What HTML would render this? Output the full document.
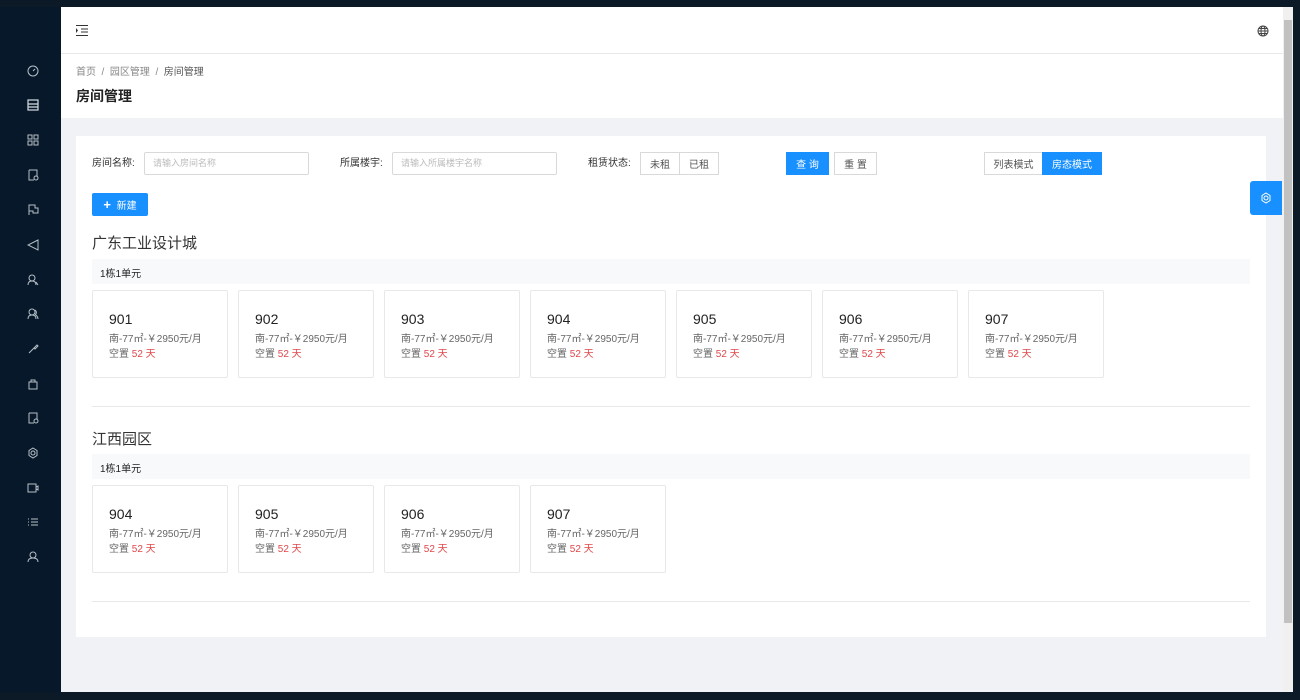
<!DOCTYPE html>
<html><head><meta charset="utf-8"><style>
*{margin:0;padding:0;box-sizing:border-box}
body{width:1300px;height:700px;background:#0b1a26;font-family:"Liberation Sans","Noto Sans CJK SC",sans-serif;position:relative;overflow:hidden;color:#333}
.side{position:absolute;left:0;top:7px;width:61px;height:685px;background:#061829}
.side svg{position:absolute;left:27px;width:12px;height:12px}
.main{position:absolute;left:61px;top:7px;width:1222px;height:685px;background:#f0f2f5}
.hdr{position:absolute;left:0;top:0;width:1222px;height:47px;background:#fff;border-bottom:1px solid #e8e8e8}
.bc{position:absolute;left:0;top:47px;width:1222px;height:64px;background:#fff}
.card{position:absolute;left:15px;top:129px;width:1190px;height:501px;background:#fff}
.abs{position:absolute}
.lbl{font-size:10px;color:#333;line-height:23px}
.inp{border:1px solid #d9d9d9;height:23px;font-size:9px;color:#bbb;padding:0 8px;line-height:21px;border-radius:2px}
.btn{border:1px solid #d9d9d9;height:23px;font-size:10px;display:flex;align-items:center;justify-content:center;color:#555;background:#fff}
.pri{background:#1890ff;border-color:#1890ff;color:#fff}
.room{position:absolute;width:136px;height:88px;border:1px solid #e8e8e8;border-radius:2px;background:#fff}
.room b{position:absolute;left:16px;top:20px;font-weight:normal;font-size:14px;color:#222}
.room .d{position:absolute;left:16px;top:39px;font-size:10px;color:#666}
.room .v{position:absolute;left:16px;top:54px;font-size:10px;color:#666}
.room .v span{color:#e0474a}
.bar{position:absolute;left:16px;width:1158px;height:25px;background:#f8f9fa;font-size:10px;color:#222;padding:6px 8px}
.ttl{position:absolute;left:16px;font-size:15px;color:#333}
.hr{position:absolute;left:16px;width:1158px;height:1px;background:#e8e8e8}
</style></head><body>
<div class="side">
<svg style="top:58px" viewBox="0 0 12 12" fill="none" stroke="#b8c0c8" stroke-width="1"><circle cx="6" cy="6" r="5"/><path d="M6 6l2-2"/></svg>
<svg style="top:92px" viewBox="0 0 12 12" fill="none" stroke="#d8dde2" stroke-width="1.2"><rect x="1" y="1" width="10" height="10"/><path d="M1 5h10M1 8h10"/></svg>
<svg style="top:127px" viewBox="0 0 12 12" fill="none" stroke="#b8c0c8"><rect x="1" y="1" width="4" height="4"/><rect x="7" y="1" width="4" height="4"/><rect x="1" y="7" width="4" height="4"/><rect x="7" y="7" width="4" height="4"/></svg>
<svg style="top:162px" viewBox="0 0 12 12" fill="none" stroke="#b8c0c8"><path d="M2 1h8v6M2 1v10h5"/><circle cx="9" cy="9" r="2"/></svg>
<svg style="top:197px" viewBox="0 0 12 12" fill="none" stroke="#b8c0c8"><path d="M2 11V1h6v3h3v5H6V7H2"/></svg>
<svg style="top:232px" viewBox="0 0 12 12" fill="none" stroke="#b8c0c8"><path d="M11 1L1 6l10 5z"/></svg>
<svg style="top:267px" viewBox="0 0 12 12" fill="none" stroke="#b8c0c8"><circle cx="5" cy="4" r="3"/><path d="M1 11c0-3 2-4 4-4s4 1 4 4M9 8l2 3"/></svg>
<svg style="top:301px" viewBox="0 0 12 12" fill="none" stroke="#b8c0c8"><circle cx="5" cy="4" r="3"/><path d="M1 11c0-3 2-4 4-4s4 1 4 4M8 2a3 3 0 010 5M11 11c0-2-1-3-2-4"/></svg>
<svg style="top:336px" viewBox="0 0 12 12" fill="none" stroke="#b8c0c8"><path d="M2 10l5-5M7 5l3-3 1 1-3 3z"/></svg>
<svg style="top:371px" viewBox="0 0 12 12" fill="none" stroke="#b8c0c8"><rect x="2" y="4" width="8" height="7"/><path d="M4 4V2h4v2"/></svg>
<svg style="top:405px" viewBox="0 0 12 12" fill="none" stroke="#b8c0c8"><path d="M2 1h8v6M2 1v10h5"/><circle cx="9" cy="9" r="2"/></svg>
<svg style="top:440px" viewBox="0 0 12 12" fill="none" stroke="#b8c0c8"><circle cx="6" cy="6" r="2"/><path d="M6 1l4 2.5v5L6 11 2 8.5v-5z"/></svg>
<svg style="top:475px" viewBox="0 0 12 12" fill="none" stroke="#b8c0c8"><rect x="1" y="2" width="8" height="8"/><path d="M9 5l2-1v4l-2-1"/></svg>
<svg style="top:509px" viewBox="0 0 12 12" fill="none" stroke="#b8c0c8"><path d="M4 3h7M4 6h7M4 9h7M1 3h1M1 6h1M1 9h1"/></svg>
<svg style="top:544px" viewBox="0 0 12 12" fill="none" stroke="#b8c0c8"><circle cx="6" cy="4" r="3"/><path d="M1 11c0-3 2-4 5-4s5 1 5 4"/></svg>
</div>
<div class="main">
<div class="hdr">
<svg class="abs" style="left:15px;top:18px" width="12" height="11" viewBox="0 0 12 11" fill="none" stroke="#333"><path d="M0 .5h12M5 4h7M5 7h7M0 10.5h12"/><path d="M0 3l2 2.5L0 8z" fill="#333" stroke="none"/></svg>
<svg class="abs" style="left:1196px;top:18px" width="12" height="12" viewBox="0 0 12 12" fill="none" stroke="#444"><circle cx="6" cy="6" r="5"/><ellipse cx="6" cy="6" rx="2" ry="5"/><path d="M1 6h10M2 3.5h8M2 8.5h8"/></svg>
</div>
<div class="bc">
<div class="abs" style="left:15px;top:9px;font-size:10px;color:#888">首页 &nbsp;/&nbsp; 园区管理 &nbsp;/&nbsp; <span style="color:#555">房间管理</span></div>
<div class="abs" style="left:15px;top:32px;font-size:14px;font-weight:bold;color:#222">房间管理</div>
</div>
<div class="card">
<div class="abs lbl" style="left:16px;top:16px">房间名称:</div>
<div class="abs inp" style="left:68px;top:16px;width:165px">请输入房间名称</div>
<div class="abs lbl" style="left:264px;top:16px">所属楼宇:</div>
<div class="abs inp" style="left:316px;top:16px;width:165px">请输入所属楼宇名称</div>
<div class="abs lbl" style="left:512px;top:16px">租赁状态:</div>
<div class="abs btn" style="left:564px;top:16px;width:40px">未租</div>
<div class="abs btn" style="left:603px;top:16px;width:40px">已租</div>
<div class="abs btn pri" style="left:710px;top:16px;width:43px">查 询</div>
<div class="abs btn" style="left:758px;top:16px;width:43px">重 置</div>
<div class="abs btn" style="left:908px;top:16px;width:59px">列表模式</div>
<div class="abs btn pri" style="left:966px;top:16px;width:60px">房态模式</div>
<div class="abs btn pri" style="left:16px;top:57px;width:56px;border-radius:2px"><b style="font-size:13px">+</b>&nbsp; 新建</div>
<div class="ttl" style="top:96px">广东工业设计城</div>
<div class="bar" style="top:123px">1栋1单元</div>
<div class="room" style="left:16px;top:154px"><b>901</b><div class="d">南-77㎡-￥2950元/月</div><div class="v">空置 <span>52 天</span></div></div>
<div class="room" style="left:162px;top:154px"><b>902</b><div class="d">南-77㎡-￥2950元/月</div><div class="v">空置 <span>52 天</span></div></div>
<div class="room" style="left:308px;top:154px"><b>903</b><div class="d">南-77㎡-￥2950元/月</div><div class="v">空置 <span>52 天</span></div></div>
<div class="room" style="left:454px;top:154px"><b>904</b><div class="d">南-77㎡-￥2950元/月</div><div class="v">空置 <span>52 天</span></div></div>
<div class="room" style="left:600px;top:154px"><b>905</b><div class="d">南-77㎡-￥2950元/月</div><div class="v">空置 <span>52 天</span></div></div>
<div class="room" style="left:746px;top:154px"><b>906</b><div class="d">南-77㎡-￥2950元/月</div><div class="v">空置 <span>52 天</span></div></div>
<div class="room" style="left:892px;top:154px"><b>907</b><div class="d">南-77㎡-￥2950元/月</div><div class="v">空置 <span>52 天</span></div></div>
<div class="hr" style="top:270px"></div>
<div class="ttl" style="top:292px">江西园区</div>
<div class="bar" style="top:318px">1栋1单元</div>
<div class="room" style="left:16px;top:349px"><b>904</b><div class="d">南-77㎡-￥2950元/月</div><div class="v">空置 <span>52 天</span></div></div>
<div class="room" style="left:162px;top:349px"><b>905</b><div class="d">南-77㎡-￥2950元/月</div><div class="v">空置 <span>52 天</span></div></div>
<div class="room" style="left:308px;top:349px"><b>906</b><div class="d">南-77㎡-￥2950元/月</div><div class="v">空置 <span>52 天</span></div></div>
<div class="room" style="left:454px;top:349px"><b>907</b><div class="d">南-77㎡-￥2950元/月</div><div class="v">空置 <span>52 天</span></div></div>
<div class="hr" style="top:465px"></div>
</div>
<div class="abs" style="left:1189px;top:174px;width:32px;height:34px;background:#1890ff;border-radius:3px 0 0 3px">
<svg class="abs" style="left:10px;top:11px" width="12" height="12" viewBox="0 0 12 12" fill="none" stroke="#fff"><circle cx="6" cy="6" r="2"/><path d="M6 1l4 2.5v5L6 11 2 8.5v-5z"/></svg></div>
</div>
<div class="abs" style="left:1283px;top:7px;width:10px;height:685px;background:#f0f0f0">
<div class="abs" style="left:1px;top:13px;width:8px;height:603px;background:#c1c1c1"></div></div>
</body></html>
